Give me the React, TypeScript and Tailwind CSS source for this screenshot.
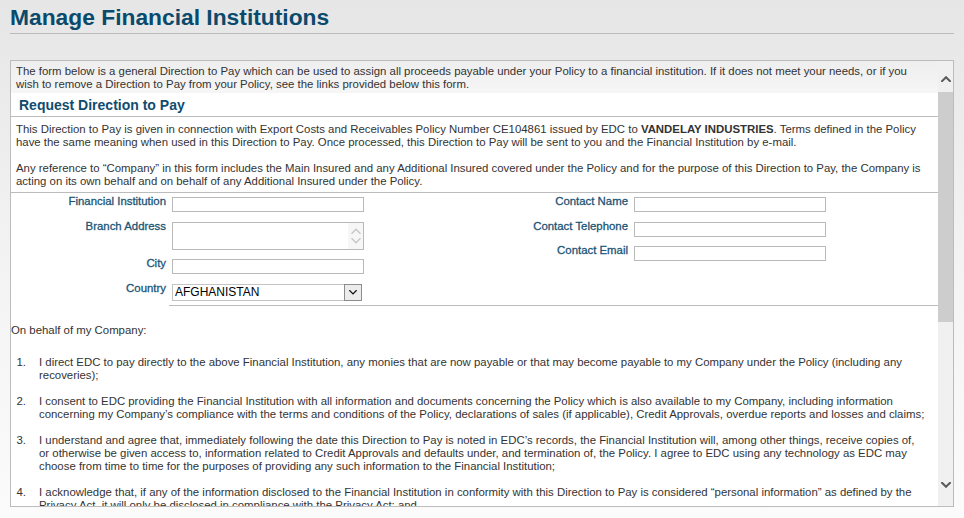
import React from "react";

const Chevron = ({ up, color, size = 10, stroke = 2 }: { up?: boolean; color: string; size?: number; stroke?: number }) => (
    <svg width={size} height={size * 0.6} viewBox="0 0 10 6" fill="none">
        <polyline
            points={up ? "1,5.2 5,1.2 9,5.2" : "1,0.8 5,4.8 9,0.8"}
            stroke={color}
            strokeWidth={stroke}
            strokeLinecap="square"
        />
    </svg>
);

const labelCls = "text-right text-[11.4px] leading-[13px] text-[#1b5575] [-webkit-text-stroke:0.3px_#1b5575]";
const inputCls = "mt-[2px] h-[15px] w-[192px] border border-[#b9b9b9] bg-white";

function FormRow({ label, children, className = "" }: { label: string; children: React.ReactNode; className?: string }) {
    return (
        <div className={`flex items-start gap-[6px] ${className}`}>
            <div className={`w-[155px] ${labelCls}`}>{label}</div>
            {children}
        </div>
    );
}

function ContactRow({ label, className = "" }: { label: string; className?: string }) {
    return (
        <div className={`flex items-start gap-[6px] ${className}`}>
            <div className={`w-[150px] ${labelCls}`}>{label}</div>
            <input readOnly className={inputCls} />
        </div>
    );
}

const items = [
    "I direct EDC to pay directly to the above Financial Institution, any monies that are now payable or that may become payable to my Company under the Policy (including any recoveries);",
    "I consent to EDC providing the Financial Institution with all information and documents concerning the Policy which is also available to my Company, including information concerning my Company\u2019s compliance with the terms and conditions of the Policy, declarations of sales (if applicable), Credit Approvals, overdue reports and losses and claims;",
    "I understand and agree that, immediately following the date this Direction to Pay is noted in EDC\u2019s records, the Financial Institution will, among other things, receive copies of, or otherwise be given access to, information related to Credit Approvals and defaults under, and termination of, the Policy. I agree to EDC using any technology as EDC may choose from time to time for the purposes of providing any such information to the Financial Institution;",
    "I acknowledge that, if any of the information disclosed to the Financial Institution in conformity with this Direction to Pay is considered \u201cpersonal information\u201d as defined by the Privacy Act, it will only be disclosed in compliance with the Privacy Act; and",
];

export default function App() {
    return (
        <div className="min-h-screen bg-gradient-to-b from-[#e6e6e6] via-[#f3f3f3] to-[#fbfbfb] px-[10px] pt-[3px] font-['Liberation_Sans',Arial,sans-serif] text-[11.4px] leading-[13px] text-[#333]">
            <h1 className="border-b border-[#bcbcbc] pb-[2px] text-[22.8px] font-bold leading-[28px] text-[#0a4a6c]">
                Manage Financial Institutions
            </h1>

            <div className="mt-[26px] flex h-[447px] border border-[#bcbcbc] bg-white">
                <div className="flex-1 overflow-hidden">
                    <div className="bg-gradient-to-b from-[#eeeeee] to-[#f6f6f6] pb-[2px] pl-[5px] pr-[12px] pt-[4px]">
                        The form below is a general Direction to Pay which can be used to assign all proceeds payable under your Policy to a financial institution. If it does not meet your needs, or if you wish to remove a Direction to Pay from your Policy, see the links provided below this form.
                    </div>

                    <h2 className="border-b border-[#bcbcbc] pb-[3px] pl-[8px] pt-[4px] text-[14px] font-bold leading-[16px] text-[#0f4c6e]">
                        Request Direction to Pay
                    </h2>

                    <div className="border-b border-[#bcbcbc] px-[5px] pb-[4px] pt-[6px]">
                        <p className="mb-[13px]">
                            This Direction to Pay is given in connection with Export Costs and Receivables Policy Number CE104861 issued by EDC to <b>VANDELAY INDUSTRIES</b>. Terms defined in the Policy have the same meaning when used in this Direction to Pay. Once processed, this Direction to Pay will be sent to you and the Financial Institution by e-mail.
                        </p>
                        <p>
                            Any reference to &ldquo;Company&rdquo; in this form includes the Main Insured and any Additional Insured covered under the Policy and for the purpose of this Direction to Pay, the Company is acting on its own behalf and on behalf of any Additional Insured under the Policy.
                        </p>
                    </div>

                    <div className="flex pb-[4px] pt-[2px]">
                        <div className="w-[353px]">
                            <FormRow label="Financial Institution" className="mb-[8px]">
                                <input readOnly className={inputCls} />
                            </FormRow>
                            <FormRow label="Branch Address" className="mb-[7px]">
                                <div className="mt-[2px] flex h-[28px] w-[192px] justify-end border border-[#b9b9b9] bg-white">
                                    <div className="flex w-[15px] flex-col items-center justify-center gap-[4px] bg-[#f6f6f6]">
                                        <Chevron up color="#c6c6c6" size={10} stroke={1.4} />
                                        <Chevron color="#c6c6c6" size={10} stroke={1.4} />
                                    </div>
                                </div>
                            </FormRow>
                            <FormRow label="City" className="mb-[8px]">
                                <input readOnly className={inputCls} />
                            </FormRow>
                            <FormRow label="Country">
                                <div className="mt-[2px] flex h-[17px] w-[190px] items-center border border-[#c4c4c4] bg-white">
                                    <span className="flex-1 pl-[2px] text-[12px] leading-[15px] text-black">AFGHANISTAN</span>
                                    <div className="-mr-px flex h-[17px] w-[18px] items-center justify-center border border-[#8c8c8c] bg-[#ececec]">
                                        <Chevron color="#111" size={8} stroke={1.6} />
                                    </div>
                                </div>
                            </FormRow>
                        </div>
                        <div className="ml-[114px]">
                            <ContactRow label="Contact Name" className="mb-[8px]" />
                            <ContactRow label="Contact Telephone" className="mb-[7px]" />
                            <ContactRow label="Contact Email" />
                        </div>
                    </div>
                    <div className="ml-[158px] border-b border-[#bcbcbc]" />

                    <p className="mt-[18px]">On behalf of my Company:</p>

                    <ol className="mt-[19px] pr-[11px]">
                        {items.map((text, i) => (
                            <li key={i} className="mb-[13px] flex">
                                <span className="w-[15px] shrink-0 text-right">{i + 1}.</span>
                                <span className="pl-[13px]">{text}</span>
                            </li>
                        ))}
                    </ol>
                </div>

                <div className="flex w-[15px] flex-col bg-[#f0f0f0]">
                    <div className="flex h-[31px] justify-center pt-[15px]">
                        <Chevron up color="#5a5a5a" />
                    </div>
                    <div className="h-[230px] bg-[#cdcdcd]" />
                    <div className="flex-1" />
                    <div className="flex h-[31px] justify-center pt-[7px]">
                        <Chevron color="#5a5a5a" />
                    </div>
                </div>
            </div>
        </div>
    );
}
